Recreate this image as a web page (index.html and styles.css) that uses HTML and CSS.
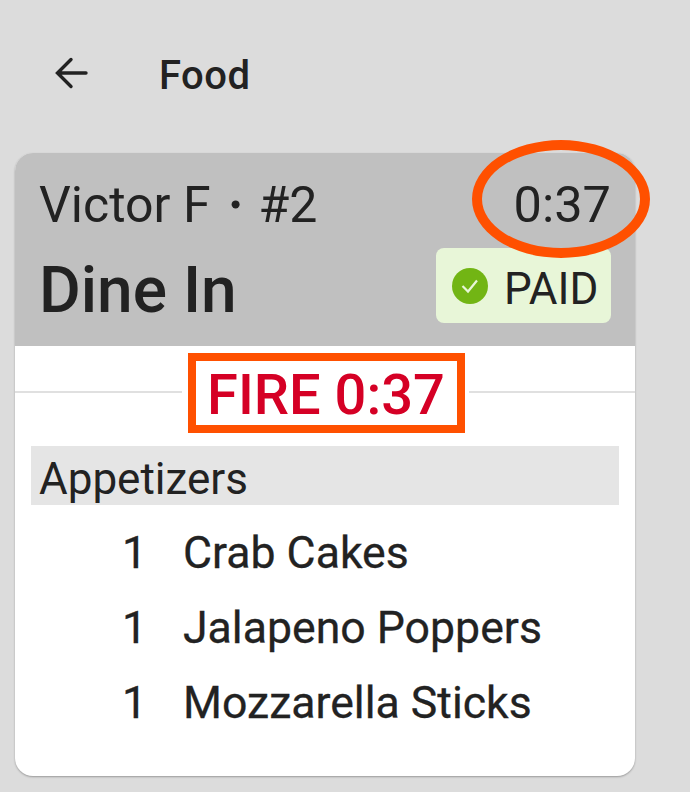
FILE: index.html
```html
<!DOCTYPE html>
<html lang="en">
<head>
  <meta charset="UTF-8">
  <meta name="viewport" content="width=device-width, initial-scale=1.0">
  <title>Food</title>
  <link rel="stylesheet" href="styles.css">
</head>
<body>
  <header class="topbar">
    <svg class="back-icon" width="48" height="48" viewBox="0 0 48 48" fill="none">
      <path d="M38 22H10M23 8.5L9.5 22L23 35.5" stroke="#222" stroke-width="3.4" stroke-linecap="round"/>
    </svg>
    <span class="topbar-title">Food</span>
  </header>

  <div class="card">
    <div class="card-head">
      <div class="head-row">
        <span class="guest">Victor F<span class="dot">・</span>#2</span>
        <span class="timer">0:37</span>
      </div>
      <div class="head-row second">
        <span class="order-type">Dine In</span>
        <span class="badge">
          <svg class="badge-icon" width="36" height="36" viewBox="0 0 36 36">
            <circle cx="18" cy="18" r="18" fill="#72b514"/>
            <path d="M10.5 18L16 23.5L25 12.5" fill="none" stroke="#e8f6d8" stroke-width="2.2"/>
          </svg>
          PAID
        </span>
      </div>
      <!-- annotation ring round the timer -->
      <div class="timer-ring"></div>
    </div>

    <div class="fire-row">
      <div class="fire-line"></div>
      <div class="fire-box">FIRE 0:37</div>
      <div class="fire-line"></div>
    </div>

    <div class="course">Appetizers</div>
    <div class="item"><span class="qty">1</span><span>Crab Cakes</span></div>
    <div class="item"><span class="qty">1</span><span>Jalapeno Poppers</span></div>
    <div class="item"><span class="qty">1</span><span>Mozzarella Sticks</span></div>
  </div>
</body>
</html>
```

FILE: styles.css
```css
html, body {
  height: 100%;
}
body {
  margin: 0;
  background-color: #dcdcdc;
  font-family: Roboto, "Liberation Sans", sans-serif;
  color: #222;
  overflow: hidden;
}
.topbar {
  display: flex;
  align-items: center;
  height: 153px;
  box-sizing: border-box;
  padding: 0 0 3px 48px;
}
.back-icon {
  margin-right: 63px;
}
.topbar-title {
  font-size: 40px;
  font-weight: 500;
  letter-spacing: 0.5px;
}
.card {
  position: relative;
  width: 620px;
  height: 623px;
  margin-left: 15px;
  background-color: #fff;
  border-radius: 18px;
  box-shadow: 0 1px 2px rgba(0, 0, 0, 0.3);
}
.card-head {
  position: relative;
  height: 193px;
  box-sizing: border-box;
  padding: 23px 24px 0 24px;
  background-color: #c0c0c0;
  border-radius: 18px 18px 0 0;
}
.head-row {
  display: flex;
  justify-content: space-between;
  align-items: center;
}
.head-row.second {
  align-items: flex-start;
  margin-top: 14px;
}
.guest, .timer {
  font-size: 50px;
  line-height: 58px;
}
.dot {
  margin: 0 -1px;
}
.timer {
  font-size: 50.5px;
}
.order-type {
  font-size: 64px;
  font-weight: 500;
  line-height: 75px;
  padding-top: 5px;
}
.badge {
  display: flex;
  align-items: center;
  gap: 16px;
  width: 175px;
  height: 75px;
  box-sizing: border-box;
  padding: 6px 0 0 16px;
  background-color: #e8f6d8;
  border-radius: 8px;
  font-size: 44px;
  line-height: 1;
}
.badge-icon {
  margin-top: -6px;
}
.timer-ring {
  position: absolute;
  top: -13px;
  left: 457px;
  width: 178px;
  height: 118px;
  box-sizing: border-box;
  border: 10px solid #ff5000;
  border-radius: 50%;
}
.fire-row {
  display: flex;
  align-items: center;
  margin-top: 7px;
}
.fire-line {
  flex: 1;
  height: 2px;
  margin-bottom: 3px;
  background-color: #e0e0e0;
}
.fire-box {
  width: 277px;
  height: 80px;
  margin: 0 4px 0 6px;
  box-sizing: border-box;
  border: 8px solid #ff5000;
  color: #d50025;
  font-size: 56px;
  font-weight: 500;
  line-height: 69px;
  text-align: center;
}
.course {
  height: 59px;
  margin: 13px 16px 11px;
  padding-left: 8px;
  background-color: #e5e5e5;
  font-size: 44px;
  line-height: 67px;
}
.item {
  display: flex;
  height: 75px;
  font-size: 44.6px;
  line-height: 75px;
  -webkit-text-stroke: 0.3px #222;
}
.qty {
  flex: none;
  width: 168px;
  padding-right: 36px;
  box-sizing: border-box;
  text-align: right;
}
```
